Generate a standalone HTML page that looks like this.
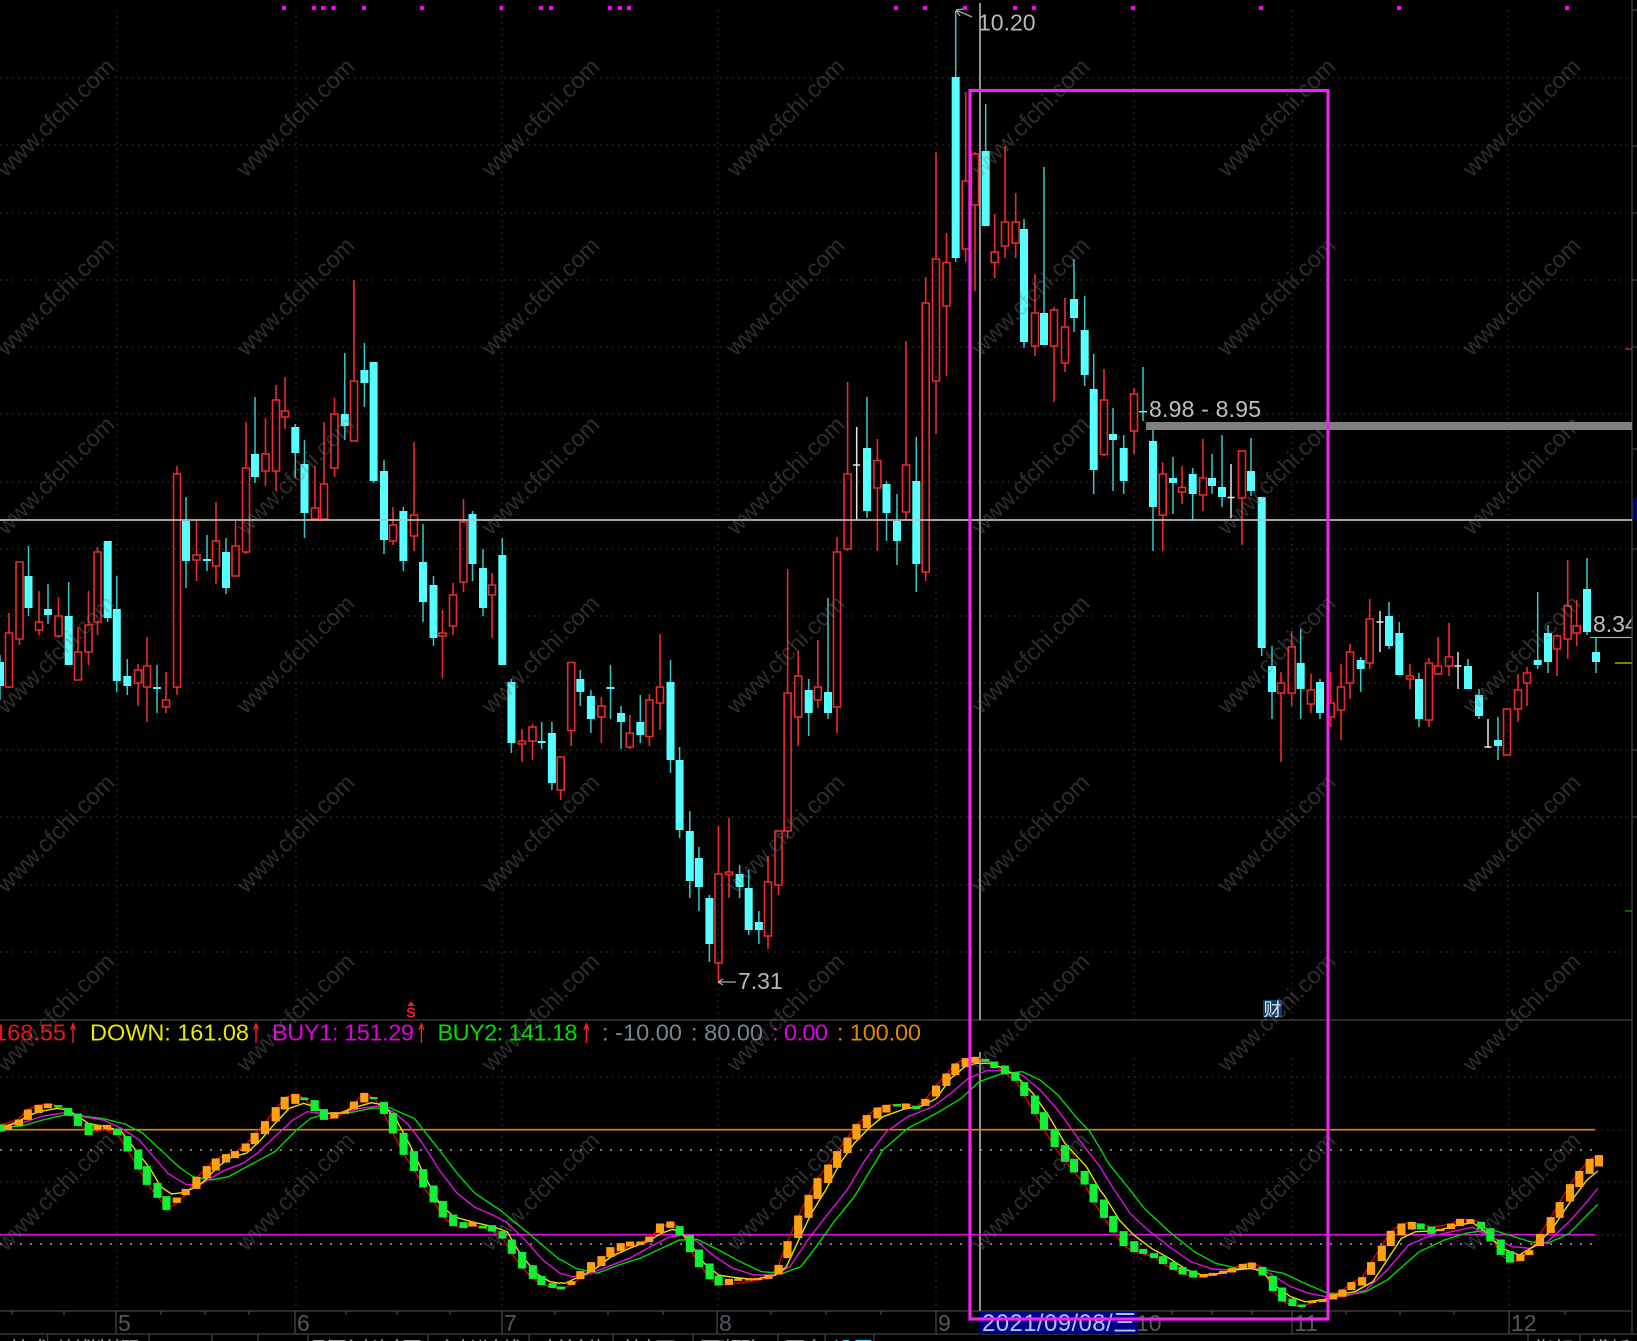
<!DOCTYPE html>
<html><head><meta charset="utf-8"><title>K线图</title>
<style>
html,body{margin:0;padding:0;background:#000;width:1637px;height:1341px;overflow:hidden}
svg{display:block;position:absolute;left:0;top:0}
text{font-family:"Liberation Sans","Noto Sans CJK SC",sans-serif}
.wm text{font-size:23.5px;fill:rgba(125,125,125,.36);text-anchor:middle}
.ln{fill:none;vector-effect:non-scaling-stroke;stroke-width:1.4}
.g{stroke:#11f033;fill:#11f033;stroke-width:1;vector-effect:non-scaling-stroke}
.o{stroke:#ffa010;fill:#ffa010;stroke-width:1;vector-effect:non-scaling-stroke}
</style></head><body>
<svg width="1637" height="1341" viewBox="0 0 1637 1341" xmlns="http://www.w3.org/2000/svg">
<rect width="1637" height="1341" fill="#000"/>
<!-- grid main -->
<path fill="none" stroke="#323232" stroke-width="1.2" stroke-dasharray="1.5 4.5" d="M0 78H1632M0 145H1632M0 213H1632M0 280H1632M0 347H1632M0 414H1632M0 482H1632M0 549H1632M0 616H1632M0 683H1632M0 750H1632M0 817H1632M0 885H1632M0 952H1632M117 10V1020M296 10V1020M502 10V1020M718 10V1020M936 10V1020M1134 10V1020M1292 10V1020M1508 10V1020"/>
<!-- grid lower -->
<path fill="none" stroke="#323232" stroke-width="1.2" stroke-dasharray="1.5 4.5" d="M0 1077H1632M0 1182H1632M1595 1130H1632M1595 1235H1632M117 1058V1311M296 1058V1311M502 1058V1311M718 1058V1311M936 1058V1311M1134 1058V1311M1292 1058V1311M1509 1058V1311"/>
<path fill="none" stroke="#a0a0a0" stroke-width="1.6" stroke-dasharray="2 8" d="M0 1150H1598M0 1244H1598"/>
<!-- frame -->
<path fill="none" stroke="#383838" stroke-width="1.5" d="M0 1020H1632M0 1311H1632M0 1334H1637M1632 0V1334M1632 10H1637M1632 146H1637M1632 213H1637M1632 280H1637M1632 347H1637M1632 449H1637M1632 549H1637M1632 649H1637M1632 750H1637M1632 817H1637"/>
<!-- top dots -->
<path fill="#f0f" d="M282 6h4v4h-4zM312 6h4v4h-4zM321 6h4v4h-4zM331.500 6h4v4h-4zM362 6h4v4h-4zM420 6h4v4h-4zM499.500 6h4v4h-4zM539 6h4v4h-4zM549 6h4v4h-4zM608 6h4v4h-4zM618 6h4v4h-4zM627 6h4v4h-4zM894 6h4v4h-4zM923 6h4v4h-4zM963 6h4v4h-4zM1013 6h4v4h-4zM1032 6h4v4h-4zM1131 6h4v4h-4zM1259 6h4v4h-4zM1397 6h4v4h-4zM1565 6h4v4h-4z"/>
<!-- crosshair -->
<path fill="none" stroke="#b4b4b4" stroke-width="1.6" d="M980 3V1020M980 1052V1311"/>
<!-- cyan wicks -->
<path fill="none" stroke="#38c8c8" stroke-width="1.5" d="M0 655V700M28.500 546V616M48 584V624M68.700 582V665M107.700 541V622M116.800 576V692M127.300 659V695M157 665V713M186 497V588M207 535V571M226 538V594M255 397V483M295.300 424V478M304.500 440V538M344.800 353V440M364.400 343V407M373.600 362V483M384 460V554M403.400 507V571M423 524V622M433.500 576V646M472.500 511V581M483 549V616M502.300 538V665M511.400 679V753M541.700 722V749M551.900 722V790M580.300 670V706M590.900 690V733M610.500 665V719M621 706V749M640.300 695V743M670.500 660V773M679.600 747V838M689.800 811V898M698.900 847V911M709.400 895V962M739.600 865V898M748.700 870V935M758.900 911V944M808.700 679V736M828 598V719M867 397V518M886.500 481V541M897 494V565M916.300 437V592M955.700 11V262M985.700 104V226M1024 219V348M1044 167V345M1074 259V332M1084.700 296V386M1093.700 354V494M1113 408V491M1123.700 435V494M1143 367V421M1153 429V551M1173 457V514M1192.700 468V520M1212 454V494M1222 435V507M1251 438V496M1261.700 497V656M1272 646V719M1300.700 629V719M1320 679V719M1360.700 657V692M1389 602V649M1399.300 622V675M1419 673V727M1468 659V689M1479 689V719M1498 717V760M1537.700 592V669M1548 625V673M1587 558V635M1596 638V673"/>
<!-- cyan bodies -->
<path fill="#55ffff" d="M-4 662h8V686h-8zM24.500 576h8V608h-8zM44 609h8V615h-8zM64.700 616h8V665h-8zM103.700 541h8V618h-8zM112.800 609h8V681h-8zM123.300 676h8V686h-8zM153 687h8V689h-8zM182 521h8V561h-8zM203 559h8V561h-8zM222 552h8V588h-8zM251 454h8V477h-8zM291.300 427h8V453h-8zM300.500 464h8V513h-8zM340.800 414h8V426h-8zM360.400 370h8V383h-8zM369.600 362h8V481h-8zM380 471h8V540h-8zM399.400 511h8V561h-8zM419 562h8V602h-8zM429.500 585h8V638h-8zM468.500 514h8V564h-8zM479 568h8V608h-8zM498.300 555h8V665h-8zM507.400 682h8V743h-8zM537.700 741h8V743h-8zM547.900 733h8V783h-8zM576.300 679h8V692h-8zM586.900 696h8V719h-8zM606.500 687h8V689h-8zM617 713h8V722h-8zM636.300 722h8V735h-8zM666.500 682h8V760h-8zM675.600 760h8V830h-8zM685.800 831h8V881h-8zM694.900 858h8V887h-8zM705.400 898h8V944h-8zM735.600 874h8V887h-8zM744.700 888h8V930h-8zM754.900 922h8V930h-8zM804.700 690h8V713h-8zM824 692h8V713h-8zM863 448h8V511h-8zM882.500 484h8V513h-8zM893 521h8V541h-8zM912.300 481h8V564h-8zM951.700 77h8V258h-8zM981.700 151h8V226h-8zM1020 229h8V342h-8zM1040 313h8V345h-8zM1070 299h8V318h-8zM1080.700 330h8V375h-8zM1089.700 389h8V470h-8zM1109 434h8V440h-8zM1119.700 448h8V481h-8zM1139 411h8V412.500h-8zM1149 441h8V507h-8zM1169 478h8V483h-8zM1188.700 474h8V494h-8zM1208 478h8V486h-8zM1218 487h8V497h-8zM1247 471h8V491h-8zM1257.700 497h8V648h-8zM1268 666h8V692h-8zM1296.700 663h8V689h-8zM1316 682h8V713h-8zM1356.700 660h8V669h-8zM1385 616h8V646h-8zM1395.300 633h8V675h-8zM1415 679h8V719h-8zM1464 666h8V689h-8zM1475 695h8V716h-8zM1494 740h8V746h-8zM1533.700 660h8V665h-8zM1544 633h8V662h-8zM1583 589h8V632h-8zM1592 652h8V662h-8z"/>
<!-- red candles -->
<path fill="none" stroke="#ee2a2a" stroke-width="1.6" d="M9 613V633M5.500 633h7V687h-7zM9 687V688M16 562h7V639h-7zM19.500 639V645M39 591V622M35.500 622h7V630h-7zM39 630V635M58.500 597V616M55 616h7V636h-7zM58.500 636V638M78 627V652M74.500 652h7V680h-7zM88.500 591V625M85 625h7V652h-7zM88.500 652V665M97.500 547V552M94 552h7V622h-7zM97.500 622V635M138 664V670M134.500 670h7V683h-7zM138 683V706M147 637V666M143.500 666h7V687h-7zM147 687V722M166 672V700M162.500 700h7V707h-7zM166 707V713M177 466V474M173.500 474h7V687h-7zM177 687V695M196.500 521V555M193 555h7V560h-7zM196.500 560V581M216 502V541M212.500 541h7V566h-7zM216 566V584M235.500 521V546M232 546h7V576h-7zM246 422V468M242.500 468h7V552h-7zM246 552V554M265.500 418V454M262 454h7V471h-7zM265.500 471V486M276 385V400M272.500 400h7V471h-7zM276 471V491M285 377V411M281.500 411h7V417h-7zM285 417V429M315 466V508M311.500 508h7V519h-7zM324 422V484M320.500 484h7V519h-7zM334.500 398V414M331 414h7V468h-7zM334.500 468V477M354 280V381M350.500 381h7V441h-7zM393 507V525M389.500 525h7V541h-7zM393 541V545M414 442V515M410.500 515h7V536h-7zM414 536V551M442.500 610V633M439 633h7V636h-7zM442.500 636V678M453 583V595M449.500 595h7V626h-7zM453 626V635M463.500 499V522M460 522h7V582h-7zM463.500 582V592M492 573V585M488.500 585h7V595h-7zM492 595V638M522 729V741M518.500 741h7V744h-7zM522 744V762M532.500 724V727M529 727h7V741h-7zM532.500 741V760M560.700 756V757M557.200 757h7V790h-7zM560.700 790V800M567.700 662.500h7V730.500h-7zM571.200 730.500V746M601.400 697V706M597.900 706h7V717h-7zM601.400 717V743M629.800 715V733M626.300 733h7V747h-7zM629.800 747V749M649.400 694V700M645.900 700h7V736.500h-7zM649.400 736.500V746M660 634V687M656.500 687h7V703h-7zM660 703V730M718.500 826V874M715 874h7V963h-7zM718.500 963V983M729 818V872M725.500 872h7V874.500h-7zM729 874.500V898M768 856V882M764.500 882h7V936h-7zM768 936V949M775 831h7V885h-7zM778.500 885V895M787.600 569V693M784.100 693h7V831h-7zM787.600 831V838M798.200 651V676M794.700 676h7V717h-7zM798.200 717V746M817.800 640V687M814.300 687h7V700h-7zM817.800 700V708M837 537V552M833.500 552h7V707h-7zM837 707V733M847.600 382V474M844.100 474h7V549h-7zM847.600 549V551M877.400 439V460.500M873.900 460.500h7V488h-7zM877.400 488V551M906 341V465M902.500 465h7V512h-7zM906 512V520M925.700 277V303M922.200 303h7V572h-7zM925.700 572V581M936 152V259M932.500 259h7V381h-7zM936 381V434M946.500 233V262.500M943 262.500h7V306h-7zM946.500 306V376M965.700 92V181M962.200 181h7V249h-7zM965.700 249V262M975 152V154M971.500 154h7V205h-7zM975 205V291M994.700 214V252M991.200 252h7V262.500h-7zM994.700 262.500V278M1005 146V222M1001.500 222h7V246h-7zM1005 246V258M1015.700 193V222M1012.200 222h7V243h-7zM1015.700 243V258M1035 274V313M1031.500 313h7V346h-7zM1035 346V356M1054 307V310M1050.500 310h7V346h-7zM1054 346V402M1065 298V327M1061.500 327h7V363h-7zM1065 363V372M1104 369V400M1100.500 400h7V454.500h-7zM1104 454.500V456M1134 388V394M1130.500 394h7V431h-7zM1134 431V454M1162.700 462V474M1159.200 474h7V515h-7zM1162.700 515V551M1182 466V487.500M1178.500 487.500h7V492h-7zM1182 492V504M1203 439V478M1199.500 478h7V495h-7zM1203 495V511M1242 450V451M1238.500 451h7V498h-7zM1242 498V545M1281 672V683M1277.500 683h7V693h-7zM1281 693V762M1291.700 631V647M1288.200 647h7V693h-7zM1291.700 693V706M1311 674V690M1307.500 690h7V704h-7zM1311 704V713M1330.700 672V703M1327.200 703h7V717h-7zM1330.700 717V727M1341 664V687M1337.500 687h7V710h-7zM1341 710V740M1350 644V652M1346.500 652h7V683h-7zM1350 683V699M1369.700 599V619M1366.200 619h7V663h-7zM1369.700 663V669M1410 664V676M1406.500 676h7V679h-7zM1410 679V689M1429 658V663M1425.500 663h7V720h-7zM1429 720V727M1438 637V666M1434.500 666h7V674h-7zM1438 674V675M1449 623V657M1445.500 657h7V666h-7zM1449 666V676M1507 708V709M1503.500 709h7V755h-7zM1507 755V756M1518 674V690M1514.500 690h7V709h-7zM1518 709V722M1527 667V673M1523.500 673h7V683h-7zM1527 683V706M1557 634V636M1553.500 636h7V649h-7zM1557 649V676M1567.700 560V606M1564.200 606h7V639h-7zM1567.700 639V659M1576.700 600V626M1573.200 626h7V633h-7zM1576.700 633V646"/>
<!-- white doji -->
<path fill="none" stroke="#e6e6e6" stroke-width="1.5" d="M856.700 427V520M853 465H860M1231 464V518M1227.500 497.500H1234.500M1380 611V652M1376.500 622H1383.500M1458 652V689M1454.500 666H1461.500M1488 719V748M1484.500 747H1491.500"/>
<!-- main labels -->
<path fill="#808080" d="M1146 422H1632V430H1146z"/>
<path fill="none" stroke="#a8a8a8" stroke-width="1.3" d="M1590 637.500H1632M956 10L972 17M956 10L963 9M956 10L960 16M718 982H736M718 982L723 979M718 982L723 985"/>
<path fill="none" stroke="#808000" stroke-width="2" d="M1615 663H1632"/>
<path fill="none" stroke="#e02020" stroke-width="1.3" d="M1625 349H1632"/>
<path fill="none" stroke="#00a000" stroke-width="1.3" d="M1625 911H1632"/>
<text x="978" y="30.500" font-size="23" fill="#b9b9b9">10.20</text>
<text x="738" y="989" font-size="23" fill="#b9b9b9">7.31</text>
<text x="1149" y="417" font-size="23" fill="#c0c0c0" textLength="112">8.98 - 8.95</text>
<text x="1593" y="632" font-size="23" fill="#c0c0c0">8.34</text>
<rect x="1633" y="600" width="4" height="60" fill="#000"/>
<path fill="none" stroke="#383838" stroke-width="1.5" d="M1632 600V660"/>
<!-- crosshair horizontal -->
<path fill="none" stroke="#bdbdbd" stroke-width="1.8" d="M0 520H1632"/>
<rect x="1633" y="498" width="4" height="22" fill="#000080"/>
<!-- S mark, cai -->
<path fill="#f02020" d="M411 1001.500l4 4.500h-8z"/>
<text x="411" y="1017.500" font-size="14.500" font-weight="bold" fill="#f02020" text-anchor="middle">S</text>
<rect x="1263" y="1000" width="19" height="17" fill="#0c3a6c"/>
<text x="1263.500" y="1016" font-size="18" fill="#e8eef6">财</text>
<!-- lower pane levels -->
<path fill="none" stroke="#e08a00" stroke-width="1.6" d="M0 1129.700H1595"/>
<path fill="none" stroke="#e010e0" stroke-width="1.6" d="M0 1234.700H1595"/>
<!-- lower curves z6 -->
<g transform="translate(0 1000) scale(.35714 .33333)">
<polyline class="ln" stroke="#e00000" points="0,375 50,360 75,330 105,316 135,312 165,318 195,330 220,370 248,400 290,388 330,405 360,455 390,510 415,555 445,595 468,628 497,607 525,580 550,535 580,500 605,477 635,464 660,455 690,432 715,400 745,365 775,323 800,292 830,283 855,297 880,330 910,358 940,352 965,338 990,310 1020,280 1050,296 1075,340 1100,398 1130,462 1160,510 1185,560 1215,605 1240,650 1270,677 1298,683 1325,675 1355,684 1380,693 1408,714 1433,760 1462,804 1492,835 1516,854 1546,862 1568,865"/>
<polyline class="ln" stroke="#00d800" points="0,382 60,378 120,360 180,345 230,348 290,356 350,372 400,400 450,450 500,500 540,530 590,540 640,530 700,495 770,455 830,390 870,355 920,340 980,338 1040,325 1090,323 1160,355 1230,450 1280,520 1330,580 1400,630 1480,700 1568,780"/>
<polyline class="ln" stroke="#e010e0" points="0,378 60,370 120,348 180,338 230,350 290,360 340,385 390,420 430,470 470,520 520,553 560,555 620,515 680,490 720,460 770,410 820,360 860,335 900,340 960,338 1010,325 1060,318 1100,335 1140,370 1180,425 1230,510 1280,580 1330,622 1380,645 1420,668 1470,720 1520,780 1568,820"/>
<polyline class="ln" stroke="#e8e000" points="0,385 50,365 80,347 110,335 160,325 190,330 220,350 250,372 300,380 340,395 380,450 420,505 450,560 480,582 510,578 540,565 570,545 610,500 650,470 690,460 730,420 770,370 810,325 850,310 880,320 910,340 950,340 1000,320 1040,308 1075,315 1110,360 1150,440 1190,530 1230,610 1270,650 1320,665 1380,680 1420,695 1450,750 1500,820 1540,845 1568,850"/>
<path class="g" d="M-7 375h20v18h-20zM153 317h20v4h-20zM181 325h20v20h-20zM208 342h20v35h-20zM238 370h20v34h-20zM318 387h20v17h-20zM347 410h20v43h-20zM377 450h20v57h-20zM401 500h20v53h-20zM431 550h20v42h-20zM456 590h20v39h-20zM842 294h20v5h-20zM871 302h20v30h-20zM897 329h20v29h-20zM1036 293h20v3h-20zM1065 307h20v34h-20zM1090 340h20v59h-20zM1120 400h20v63h-20zM1149 455h20v57h-20zM1175 509h20v52h-20zM1204 558h20v48h-20zM1230 604h20v47h-20zM1259 645h20v32h-20zM1288 668h20v15h-20zM1342 679h20v5h-20zM1368 677h20v16h-20zM1397 695h20v19h-20zM1423 720h20v40h-20zM1452 757h20v47h-20zM1482 797h20v38h-20zM1506 829h20v25h-20z"/>
<path class="o" d="M12 378h20v10h-20zM43 360h20v15h-20zM68 330h20v28h-20zM98 316h20v22h-20zM124 312h20v11h-20zM263 376h20v12h-20zM290 376h20v10h-20zM485 594h20v13h-20zM510 568h20v16h-20zM540 532h20v33h-20zM569 500h20v33h-20zM594 477h20v33h-20zM623 464h20v22h-20zM648 455h20v18h-20zM678 432h20v21h-20zM703 400h20v31h-20zM732 365h20v36h-20zM762 323h20v40h-20zM787 292h20v35h-20zM817 283h20v27h-20zM926 338h20v16h-20zM956 336h20v4h-20zM981 306h20v20h-20zM1010 280h20v26h-20zM1313 668h20v10h-20z"/>
</g>
<!-- lower curves z7 -->
<g transform="translate(540 1000) scale(.35714 .33333)">
<polyline class="ln" stroke="#e00000" points="56,865 60,868 90,853 113,833 143,812 172,795 197,768 226,750 252,737 281,730 306,712 336,685 365,666 391,682 415,740 445,790 475,835 500,855 530,853 585,845 640,835 668,795 693,725 723,650 752,586 777,536 807,495 832,455 861,414 886,374 915,347 945,324 970,316 1025,312 1054,320 1079,298 1109,258 1138,222 1163,192 1192,176 1218,172 1247,180 1272,195 1302,220 1331,240 1356,287 1386,341 1411,389 1441,440 1470,484 1495,516 1525,552 1550,606 1568,635"/>
<polyline class="ln" stroke="#00d800" points="56,780 60,780 100,805 160,820 220,795 280,775 340,745 390,720 440,718 500,750 560,785 620,815 680,820 730,800 770,745 820,670 880,590 960,450 1030,385 1110,340 1180,295 1230,245 1290,222 1350,215 1400,240 1450,285 1500,350 1540,395 1568,445"/>
<polyline class="ln" stroke="#e010e0" points="56,820 90,830 130,825 190,800 250,775 310,740 360,712 400,705 440,725 490,770 540,805 600,825 660,825 700,800 750,720 800,650 860,570 910,480 970,395 1030,350 1100,320 1150,280 1200,235 1250,212 1300,212 1350,225 1400,270 1450,330 1510,420 1568,500"/>
<polyline class="ln" stroke="#e8e000" points="56,848 70,850 100,835 150,810 200,770 250,745 300,725 340,700 370,688 395,695 420,730 460,790 500,825 540,832 600,838 660,825 690,800 720,730 760,640 800,570 840,490 880,430 920,385 960,350 1020,327 1070,318 1110,295 1150,235 1190,200 1220,190 1260,190 1300,205 1340,235 1380,280 1420,340 1470,430 1530,500 1568,570"/>
<path class="g" d="M25 851h20v11h-20zM49 861h20v6h-20zM381 680h20v25h-20zM410 707h20v48h-20zM435 750h20v50h-20zM465 792h20v44h-20zM490 828h20v27h-20zM990 314h20v4h-20zM1044 320h20v6h-20zM1237 178h20v6h-20zM1262 186h20v17h-20zM1292 198h20v23h-20zM1321 218h20v23h-20zM1346 248h20v39h-20zM1376 288h20v53h-20zM1401 338h20v51h-20zM1431 388h20v52h-20zM1460 437h20v47h-20zM1485 478h20v38h-20zM1515 514h20v38h-20zM1540 553h20v53h-20z"/>
<path class="o" d="M78 845h20v8h-20zM103 815h20v21h-20zM133 788h20v27h-20zM162 770h20v27h-20zM187 743h20v27h-20zM216 731h20v21h-20zM242 726h20v12h-20zM271 726h20v7h-20zM296 711h20v14h-20zM326 672h20v25h-20zM355 666h20v16h-20zM519 838h20v15h-20zM545 837h20v4h-20zM575 836h20v4h-20zM600 835h20v4h-20zM630 826h20v9h-20zM658 796h20v26h-20zM683 725h20v48h-20zM713 648h20v65h-20zM742 586h20v66h-20zM767 536h20v59h-20zM797 495h20v53h-20zM822 455h20v47h-20zM851 414h20v44h-20zM876 374h20v43h-20zM905 347h20v36h-20zM935 324h20v30h-20zM960 316h20v20h-20zM1015 312h20v13h-20zM1069 298h20v18h-20zM1099 258h20v30h-20zM1128 222h20v34h-20zM1153 192h20v32h-20zM1182 176h20v24h-20zM1208 172h20v15h-20z"/>
</g>
<!-- lower curves z8 -->
<g transform="translate(1080 1000) scale(.35714 .33333)">
<polyline class="ln" stroke="#e00000" points="56,635 67,652 93,696 122,737 152,755 207,770 232,790 262,808 287,822 317,831 346,830 401,820 426,806 456,793 481,789 511,802 540,870 566,903 595,917 621,920 650,908 680,900 709,884 735,870 760,848 790,833 815,788 845,738 870,694 900,672 929,667 954,672 984,682 1039,672 1064,658 1093,659 1123,667 1149,705 1178,763 1204,786 1233,780 1258,752 1288,703 1318,653 1343,608 1372,554 1398,514 1427,478 1453,467"/>
<polyline class="ln" stroke="#00d800" points="56,445 80,490 140,570 180,625 250,695 320,755 380,790 440,805 510,808 570,820 630,850 690,878 750,885 800,875 860,840 950,755 1020,720 1080,700 1150,688 1200,705 1260,725 1310,730 1370,700 1420,645 1450,613"/>
<polyline class="ln" stroke="#e010e0" points="56,500 90,560 140,640 190,690 250,740 310,785 370,807 430,810 490,805 530,820 590,860 640,880 690,890 740,890 800,870 860,810 920,735 970,712 1040,695 1100,682 1150,710 1210,740 1260,745 1310,725 1370,665 1420,605 1450,565"/>
<polyline class="ln" stroke="#e8e000" points="56,570 70,590 110,660 150,705 200,745 250,775 300,810 340,825 380,822 430,810 480,805 510,815 550,860 590,890 630,905 680,900 720,885 770,875 820,845 860,780 900,715 940,695 1000,692 1060,675 1100,668 1140,700 1180,745 1230,765 1270,740 1320,690 1370,610 1420,540 1450,513"/>
<path class="g" d="M57 600h20v52h-20zM83 649h20v47h-20zM112 695h20v42h-20zM142 725h20v30h-20zM167 748h20v12h-20zM197 761h20v12h-20zM222 770h20v21h-20zM252 788h20v20h-20zM277 802h20v20h-20zM307 813h20v18h-20zM501 802h20v23h-20zM530 829h20v43h-20zM556 864h20v39h-20zM585 897h20v20h-20zM611 915h20v5h-20zM944 672h20v15h-20zM974 681h20v19h-20zM1113 667h20v19h-20zM1139 686h20v37h-20zM1168 720h20v43h-20zM1194 755h20v31h-20z"/>
<path class="o" d="M336 824h20v7h-20zM362 820h20v6h-20zM391 814h20v6h-20zM416 806h20v10h-20zM446 793h20v11h-20zM471 789h20v13h-20zM640 904h20v4h-20zM670 899h20v6h-20zM699 884h20v13h-20zM725 870h20v18h-20zM750 848h20v21h-20zM780 833h20v22h-20zM805 788h20v35h-20zM835 738h20v44h-20zM860 694h20v43h-20zM890 672h20v33h-20zM919 667h20v20h-20zM999 688h20v4h-20zM1029 672h20v14h-20zM1054 658h20v19h-20zM1083 659h20v11h-20zM1223 764h20v18h-20zM1248 752h20v12h-20zM1278 703h20v34h-20zM1308 653h20v45h-20zM1333 608h20v44h-20zM1362 554h20v49h-20zM1388 514h20v46h-20zM1417 478h20v42h-20zM1443 467h20v31h-20z"/>
</g>
<!-- lower text row -->
<g font-size="23.500">
<text x="66" y="1040.500" fill="#e81818" text-anchor="end">UP: 168.55</text>
<text x="90" y="1040.500" fill="#e8e800" textLength="159">DOWN: 161.08</text>
<text x="272" y="1040.500" fill="#e000e0" textLength="142">BUY1: 151.29</text>
<text x="437.500" y="1040.500" fill="#00e000" textLength="140">BUY2: 141.18</text>
<text x="602" y="1040.500" fill="#7c848e" textLength="80">: -10.00</text>
<text x="691" y="1040.500" fill="#7c848e" textLength="72">: 80.00</text>
<text x="772" y="1040.500" fill="#e000e0" textLength="56">: 0.00</text>
<text x="837" y="1040.500" fill="#e08800" textLength="84">: 100.00</text>
</g>
<path fill="none" stroke="#f02020" stroke-width="1.4" d="M73 1024V1043M70.500 1030L73 1024L75.500 1030M256 1024V1043M253.500 1030L256 1024L258.500 1030M421.400 1024V1043M418.900 1030L421.400 1024L423.900 1030M586.400 1024V1043M583.900 1030L586.400 1024L588.900 1030"/>
<!-- axis -->
<path fill="none" stroke="#3c3c3c" stroke-width="1.5" d="M116 1311V1334M295 1311V1334M502 1311V1334M717 1311V1334M936 1311V1334M1292 1311V1334M1509 1311V1334"/>
<path fill="none" stroke="#4a4a4a" stroke-width="1.2" d="M12 1311V1315M64 1311V1315M161 1311V1315M205 1311V1315M249 1311V1315M346 1311V1315M397 1311V1315M450 1311V1315M555 1311V1315M608 1311V1315M663 1311V1315M771 1311V1315M826 1311V1315M881 1311V1315M1172 1311V1315M1212 1311V1315M1252 1311V1315M1346 1311V1315M1400 1311V1315M1454 1311V1315M1565 1311V1315"/>
<g font-size="23" fill="#505862">
<text x="118" y="1331">5</text>
<text x="297" y="1331">6</text>
<text x="504" y="1331">7</text>
<text x="719" y="1331">8</text>
<text x="938" y="1331">9</text>
<text x="1136" y="1331">10</text>
<text x="1294" y="1331">11</text>
<text x="1511" y="1331">12</text>
</g>
<rect x="980" y="1312" width="158" height="22" fill="#000088"/>
<text x="982" y="1331" font-size="24" fill="#b4c6ee" textLength="155">2021/09/08/三</text>
<!-- bottom tabs -->
<path fill="none" stroke="#3c3c3c" stroke-width="1.4" d="M47.500 1334V1341M149 1334V1341M212 1334V1341M258 1334V1341M308 1334V1341M428 1334V1341M529 1334V1341M613 1334V1341M693 1334V1341M778 1334V1341M825 1334V1341M874 1334V1341M1528 1334V1341M1580 1334V1341"/>
<g font-size="20" fill="#a0a0a0">
<text x="10" y="1356">技术</text>
<text x="57" y="1356" textLength="84">均线性筹码</text>
<text x="160" y="1356">MACD</text>
<text x="222" y="1356">KDJ</text>
<text x="268" y="1356">RSI</text>
<text x="312" y="1356" textLength="110">副图主力资金图</text>
<text x="438" y="1356" textLength="84">主力进出线</text>
<text x="540" y="1356" textLength="66">大单席位</text>
<text x="622" y="1356" textLength="62">基本面+</text>
<text x="700" y="1356" textLength="66">更改配色</text>
<text x="785" y="1356">更多</text>
<text x="833" y="1356" fill="#30d8e8">设置</text>
<text x="1534" y="1356">指标</text>
<text x="1590" y="1356">模板</text>
</g>
<!-- magenta rect -->
<rect x="970" y="90.500" width="358" height="1228.500" fill="none" stroke="#f022f0" stroke-width="3.200"/>
<!-- watermarks -->
<g class="wm">
<text x="61" y="123" transform="rotate(-45 61 123)">www.cfchi.com</text><text x="301" y="123" transform="rotate(-45 301 123)">www.cfchi.com</text><text x="546" y="123" transform="rotate(-45 546 123)">www.cfchi.com</text><text x="791" y="123" transform="rotate(-45 791 123)">www.cfchi.com</text><text x="1036" y="123" transform="rotate(-45 1036 123)">www.cfchi.com</text><text x="1282" y="123" transform="rotate(-45 1282 123)">www.cfchi.com</text><text x="1527" y="123" transform="rotate(-45 1527 123)">www.cfchi.com</text>
<text x="61" y="302" transform="rotate(-45 61 302)">www.cfchi.com</text><text x="301" y="302" transform="rotate(-45 301 302)">www.cfchi.com</text><text x="546" y="302" transform="rotate(-45 546 302)">www.cfchi.com</text><text x="791" y="302" transform="rotate(-45 791 302)">www.cfchi.com</text><text x="1036" y="302" transform="rotate(-45 1036 302)">www.cfchi.com</text><text x="1282" y="302" transform="rotate(-45 1282 302)">www.cfchi.com</text><text x="1527" y="302" transform="rotate(-45 1527 302)">www.cfchi.com</text>
<text x="61" y="481" transform="rotate(-45 61 481)">www.cfchi.com</text><text x="301" y="481" transform="rotate(-45 301 481)">www.cfchi.com</text><text x="546" y="481" transform="rotate(-45 546 481)">www.cfchi.com</text><text x="791" y="481" transform="rotate(-45 791 481)">www.cfchi.com</text><text x="1036" y="481" transform="rotate(-45 1036 481)">www.cfchi.com</text><text x="1282" y="481" transform="rotate(-45 1282 481)">www.cfchi.com</text><text x="1527" y="481" transform="rotate(-45 1527 481)">www.cfchi.com</text>
<text x="61" y="660" transform="rotate(-45 61 660)">www.cfchi.com</text><text x="301" y="660" transform="rotate(-45 301 660)">www.cfchi.com</text><text x="546" y="660" transform="rotate(-45 546 660)">www.cfchi.com</text><text x="791" y="660" transform="rotate(-45 791 660)">www.cfchi.com</text><text x="1036" y="660" transform="rotate(-45 1036 660)">www.cfchi.com</text><text x="1282" y="660" transform="rotate(-45 1282 660)">www.cfchi.com</text><text x="1527" y="660" transform="rotate(-45 1527 660)">www.cfchi.com</text>
<text x="61" y="839" transform="rotate(-45 61 839)">www.cfchi.com</text><text x="301" y="839" transform="rotate(-45 301 839)">www.cfchi.com</text><text x="546" y="839" transform="rotate(-45 546 839)">www.cfchi.com</text><text x="791" y="839" transform="rotate(-45 791 839)">www.cfchi.com</text><text x="1036" y="839" transform="rotate(-45 1036 839)">www.cfchi.com</text><text x="1282" y="839" transform="rotate(-45 1282 839)">www.cfchi.com</text><text x="1527" y="839" transform="rotate(-45 1527 839)">www.cfchi.com</text>
<text x="61" y="1018" transform="rotate(-45 61 1018)">www.cfchi.com</text><text x="301" y="1018" transform="rotate(-45 301 1018)">www.cfchi.com</text><text x="546" y="1018" transform="rotate(-45 546 1018)">www.cfchi.com</text><text x="791" y="1018" transform="rotate(-45 791 1018)">www.cfchi.com</text><text x="1036" y="1018" transform="rotate(-45 1036 1018)">www.cfchi.com</text><text x="1282" y="1018" transform="rotate(-45 1282 1018)">www.cfchi.com</text><text x="1527" y="1018" transform="rotate(-45 1527 1018)">www.cfchi.com</text>
<text x="61" y="1197" transform="rotate(-45 61 1197)">www.cfchi.com</text><text x="301" y="1197" transform="rotate(-45 301 1197)">www.cfchi.com</text><text x="546" y="1197" transform="rotate(-45 546 1197)">www.cfchi.com</text><text x="791" y="1197" transform="rotate(-45 791 1197)">www.cfchi.com</text><text x="1036" y="1197" transform="rotate(-45 1036 1197)">www.cfchi.com</text><text x="1282" y="1197" transform="rotate(-45 1282 1197)">www.cfchi.com</text><text x="1527" y="1197" transform="rotate(-45 1527 1197)">www.cfchi.com</text>
</g>
</svg>
</body></html>
